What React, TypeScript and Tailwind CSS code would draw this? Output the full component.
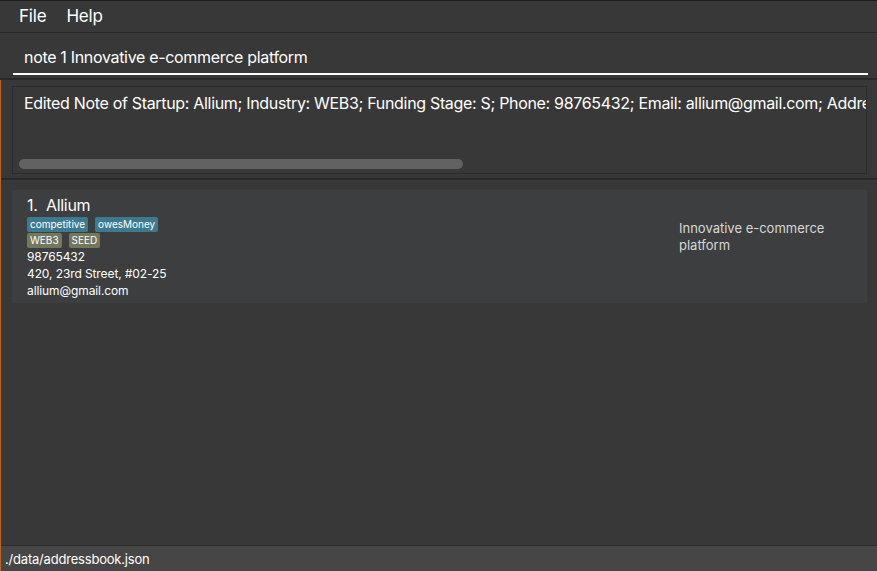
const FONT = { fontFamily: 'Inter, "Open Sans", "Liberation Sans", sans-serif' };

export default function App() {
  return (
    <div className="relative w-[877px] h-[571px] bg-[#383838] text-white flex flex-col overflow-hidden" style={FONT}>
      {/* window frame artifact */}
      <div className="absolute left-0 top-[80px] w-[1px] h-[491px] bg-[#c0641a]" />

      {/* menu bar */}
      <div className="h-[33px] border-t border-t-[#1e1e1e] border-b border-b-[#2a2a2a] flex items-center gap-[20px] pl-[19px] text-[17px] tracking-[-0.2px] shrink-0">
        <span>File</span>
        <span>Help</span>
      </div>

      {/* command box */}
      <div className="h-[47px] border-b-2 border-b-[#2a2a2a] pl-[13px] pr-[9px] flex flex-col justify-end shrink-0">
        <div className="pl-[11px] text-[16px] leading-[20px] tracking-[-0.32px] pb-[6px]">note 1 Innovative e-commerce platform</div>
        <div className="h-[2px] bg-white mb-[3px]" />
      </div>

      {/* result display */}
      <div className="h-[100px] border-b-2 border-b-[#2a2a2a] pl-[12px] pr-[10px] pt-[6px] shrink-0">
        <div className="h-[88px] border border-[#2b2b2b] bg-[#383838] flex flex-col">
          <div className="pl-[11px] pt-[6px] text-[16px] leading-[20px] tracking-[-0.32px] whitespace-nowrap overflow-hidden">
            Edited Note of Startup: Allium; Industry: WEB3; Funding Stage: S; Phone: 98765432; Email: allium@gmail.com; Address: 420, 23rd Street, #02-25
          </div>
          <div className="mt-auto mb-[4px] ml-[6px] w-[444px] h-[10px] rounded-full bg-[#626262]" />
        </div>
      </div>

      {/* list */}
      <div className="flex-1 pl-[12px] pr-[10px] pt-[10px]">
        <div className="h-[113px] bg-[#3c3e3f] flex pl-[15px] pt-[6px]">
          <div className="flex-1 flex flex-col">
            <div className="text-[16px] leading-[18px] tracking-[-0.3px]">1.&nbsp; Allium</div>
            <div className="flex gap-[7px] mt-[3px]">
              <span className="bg-[#3d7a90] rounded-[2px] px-[3px] text-[10px] leading-[15px]">competitive</span>
              <span className="bg-[#3d7a90] rounded-[2px] px-[3px] text-[10px] leading-[15px]">owesMoney</span>
            </div>
            <div className="flex gap-[7px] mt-[1px]">
              <span className="bg-[#73785a] rounded-[2px] px-[3px] text-[10px] leading-[15px]">WEB3</span>
              <span className="bg-[#73785a] rounded-[2px] px-[3px] text-[10px] leading-[15px]">SEED</span>
            </div>
            <div className="text-[12px] leading-[17px] tracking-[-0.1px]">98765432</div>
            <div className="text-[12px] leading-[17px] tracking-[-0.1px]">420, 23rd Street, #02-25</div>
            <div className="text-[12px] leading-[17px] tracking-[-0.1px]">allium@gmail.com</div>
          </div>
          <div className="w-[188px] pt-[24px] text-[13px] leading-[17px] text-[#d8d8d8]">
            Innovative e-commerce platform
          </div>
        </div>
      </div>

      {/* status bar */}
      <div className="h-[26px] border-t border-t-[#2a2a2a] bg-[#464646] flex items-center pl-[5px] pt-[2px] text-[13px] tracking-[-0.2px] shrink-0">
        ./data/addressbook.json
      </div>
    </div>
  );
}
